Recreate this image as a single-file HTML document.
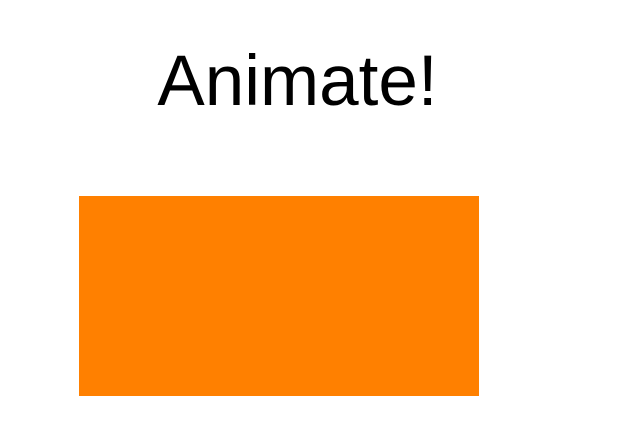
<!DOCTYPE html>
<html><head><style>
html,body{margin:0;padding:0;background:#fff;width:635px;height:448px;overflow:hidden;position:relative}
.t{position:absolute;left:0;width:595px;top:46px;text-align:center;font-family:"Liberation Sans",Helvetica,Arial,sans-serif;font-size:71px;line-height:72px;color:#000}
.r{position:absolute;left:79px;top:196px;width:400px;height:200px;background:#ff8000}
</style></head><body>
<div class="t">Animate!</div>
<div class="r"></div>
</body></html>
